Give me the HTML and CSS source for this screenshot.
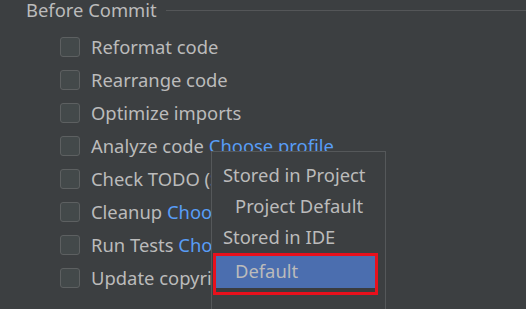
FILE: index.html
```html
<!DOCTYPE html>
<html lang="en">
<head>
    <meta charset="UTF-8">
    <title>Before Commit</title>
    <link rel="stylesheet" href="styles.css">
</head>
<body>
    <!-- Group title -->
    <div class="group-title">
        <span>Before Commit</span>
        <div class="rule"></div>
    </div>

    <!-- Options -->
    <ul class="options">
        <li><span class="box"></span>Reformat code</li>
        <li><span class="box"></span>Rearrange code</li>
        <li><span class="box"></span>Optimize imports</li>
        <li><span class="box"></span>Analyze code&nbsp;<a class="link">Choose profile</a></li>
        <li><span class="box"></span>Check TODO (Show All)</li>
        <li><span class="box"></span>Cleanup&nbsp;<a class="link">Choose profile</a></li>
        <li><span class="box"></span>Run Tests&nbsp;<a class="link">Choose configuration</a></li>
        <li><span class="box"></span>Update copyright</li>
    </ul>

    <!-- Profile popup -->
    <div class="popup">
        <div class="popup-item header">Stored in Project</div>
        <div class="popup-item">Project Default</div>
        <div class="popup-item header">Stored in IDE</div>
        <div class="popup-item selected">Default</div>
    </div>
</body>
</html>
```

FILE: styles.css
```css
* {
    margin: 0;
    padding: 0;
    box-sizing: border-box;
}

body {
    font-family: "Noto Sans", "Open Sans", sans-serif;
    background-color: #3c3f41;
    color: #bbbbbb;
    width: 526px;
    height: 309px;
    overflow: hidden;
    position: relative;
}

/* Group title */
.group-title {
    display: flex;
    align-items: center;
    gap: 9px;
    padding-left: 26px;
    height: 19px;
    font-size: 18.4px;
}

.group-title .rule {
    flex: 1;
    height: 1px;
    background: #545658;
    margin-top: 1px;
}

/* Options */
.options {
    list-style: none;
    padding: 11px 0 0 60px;
}

.options li {
    display: flex;
    align-items: center;
    height: 33px;
    font-size: 18.4px;
    white-space: nowrap;
}

.box {
    width: 20px;
    height: 20px;
    border: 1px solid #5d6061;
    border-radius: 3px;
    background: #43494a;
    margin-right: 11px;
    flex-shrink: 0;
}

.link {
    color: #589df6;
}

/* Popup */
.popup {
    position: absolute;
    left: 211px;
    top: 151px;
    width: 175px;
    height: 170px;
    background: #3c3f41;
    border: 1px solid #55585a;
    padding: 7px 0 0 3px;
}

.popup-item {
    height: 31px;
    line-height: 31px;
    font-size: 18.4px;
    padding-left: 20px;
    white-space: nowrap;
}

.popup-item.header {
    padding-left: 8px;
}

.popup-item.selected {
    height: 42px;
    width: 165px;
    margin-left: -2px;
    margin-top: 1px;
    border: 3px solid #e8101c;
    background: linear-gradient(#4b6eaf 0, #4b6eaf 32px, #3a3c3e 32px);
    color: #bbbbbb;
    line-height: 30px;
    padding-left: 19px;
}
```
